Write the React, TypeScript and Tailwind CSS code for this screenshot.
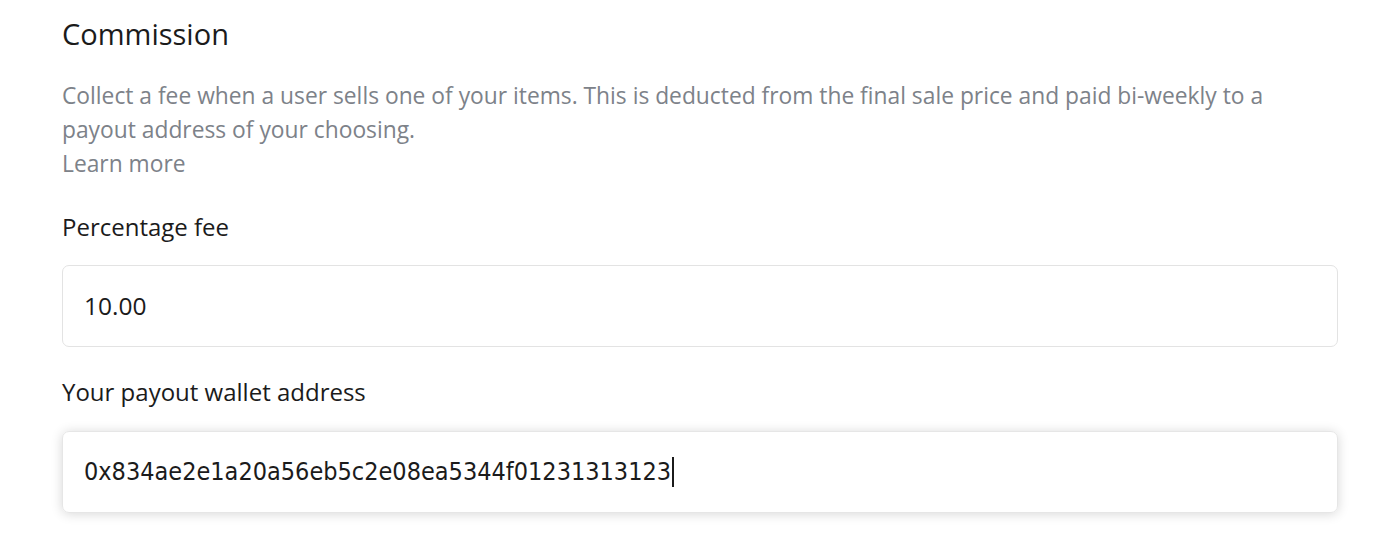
export default function App() {
  return (
    <div className="h-[560px] w-[1400px] bg-white font-['Open_Sans','Noto_Sans',sans-serif]">
      <div className="w-[1338px] pl-[62px] pt-[15px]">
        <h2 className="text-[29px] font-medium leading-[38px] text-[#1b1b1b]">Commission</h2>
        <p className="mt-[26px] text-[22.8px] leading-[34px] text-[#7d8289]">
          Collect a fee when a user sells one of your items. This is deducted from the final sale price and paid
          bi-weekly to a payout address of your choosing.
        </p>
        <a className="block text-[22.8px] leading-[34px] text-[#7d8289]">Learn more</a>

        <label className="mt-[29px] block text-[24px] leading-[34px] text-[#1b1b1b]">Percentage fee</label>
        <div className="mt-[21px] flex h-[82px] items-center rounded-[7px] border border-[#e3e3e3] px-[21px] text-[24.5px] text-[#1b1b1b]">
          10.00
        </div>

        <label className="mt-[28px] block text-[24px] leading-[34px] text-[#1b1b1b]">Your payout wallet address</label>
        <div className="mt-[22px] flex h-[82px] items-center rounded-[7px] border border-[#e6e6e6] px-[21px] text-[25px] text-[#1b1b1b] shadow-[0_1px_12px_rgba(0,0,0,0.16)]">
          <span className="font-['Liberation_Sans_Narrow','DejaVu_Sans_Condensed',sans-serif]">
            0x834ae2e1a20a56eb5c2e08ea5344f01231313123
          </span>
          <span className="ml-[1px] h-[30px] w-[2px] bg-[#1b1b1b]" />
        </div>
      </div>
    </div>
  )
}
